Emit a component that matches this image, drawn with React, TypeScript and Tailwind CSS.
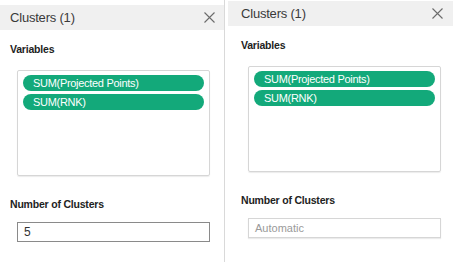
import React from 'react';

interface PanelProps {
    value?: string;
    placeholder?: string;
    focused?: boolean;
    shifted?: boolean;
}

const CloseIcon = () => (
    <svg width="11" height="11" viewBox="0 0 11 11" className="text-[#6b6b6b]">
        <path d="M0.5 0.5 L10.5 10.5 M10.5 0.5 L0.5 10.5" stroke="currentColor" strokeWidth="1.1" />
    </svg>
);

const Pill = ({ label }: { label: string }) => (
    <div className="h-[16px] rounded-full bg-[#13a97a] text-white text-[11px] tracking-[-0.3px] leading-[16px] pl-[10px]">
        {label}
    </div>
);

const ClusterPanel: React.FC<PanelProps> = ({ value, placeholder, focused, shifted }) => {
    return (
        <div className="flex flex-col">
            <div
                className={
                    shifted
                        ? 'h-[25px] bg-[#f0f0f0] flex items-center justify-between pl-[13px] pr-[10px]'
                        : 'h-[25px] bg-[#f0f0f0] flex items-center justify-between pl-[10px] pr-[9px]'
                }
            >
                <span className="text-[13px] tracking-[-0.2px] text-[#3a3a3a]">Clusters (1)</span>
                <CloseIcon />
            </div>
            <div className={shifted ? 'pl-[3px]' : ''}>
                <div className="pl-[10px] mt-[12px] text-[10.5px] tracking-[-0.2px] font-bold text-[#222] leading-[14px]">Variables</div>
                <div className="ml-[17px] mt-[14px] w-[193px] h-[106px] border border-[#d6d6d6] rounded-[2px] shadow-[0_1px_1px_rgba(0,0,0,0.08)] px-[5px] pt-[4px] flex flex-col gap-[3px]">
                    <Pill label="SUM(Projected Points)" />
                    <Pill label="SUM(RNK)" />
                </div>
                <div className="pl-[10px] mt-[21px] text-[10.5px] tracking-[-0.2px] font-bold text-[#222] leading-[14px]">Number of Clusters</div>
                <div
                    className={
                        focused
                            ? 'ml-[17px] mt-[11px] w-[193px] h-[20px] border border-[#8a8a8a] flex items-center px-[6px] text-[12px] text-[#333]'
                            : 'ml-[17px] mt-[11px] w-[193px] h-[20px] border border-[#d6d6d6] shadow-[0_1px_1px_rgba(0,0,0,0.08)] flex items-center px-[6px] text-[11px] text-[#9a9a9a]'
                    }
                >
                    {value ?? placeholder}
                </div>
            </div>
        </div>
    );
};

export default function App() {
    return (
        <div className="w-[453px] h-[262px] bg-white flex overflow-hidden font-['Liberation_Sans',Arial,sans-serif]">
            <div className="w-[225px] pt-[5px] border-r border-[#d9d9d9]">
                <ClusterPanel value="5" focused />
            </div>
            <div className="flex-1 pt-[1px] pl-[3px]">
                <ClusterPanel placeholder="Automatic" shifted />
            </div>
        </div>
    );
}
